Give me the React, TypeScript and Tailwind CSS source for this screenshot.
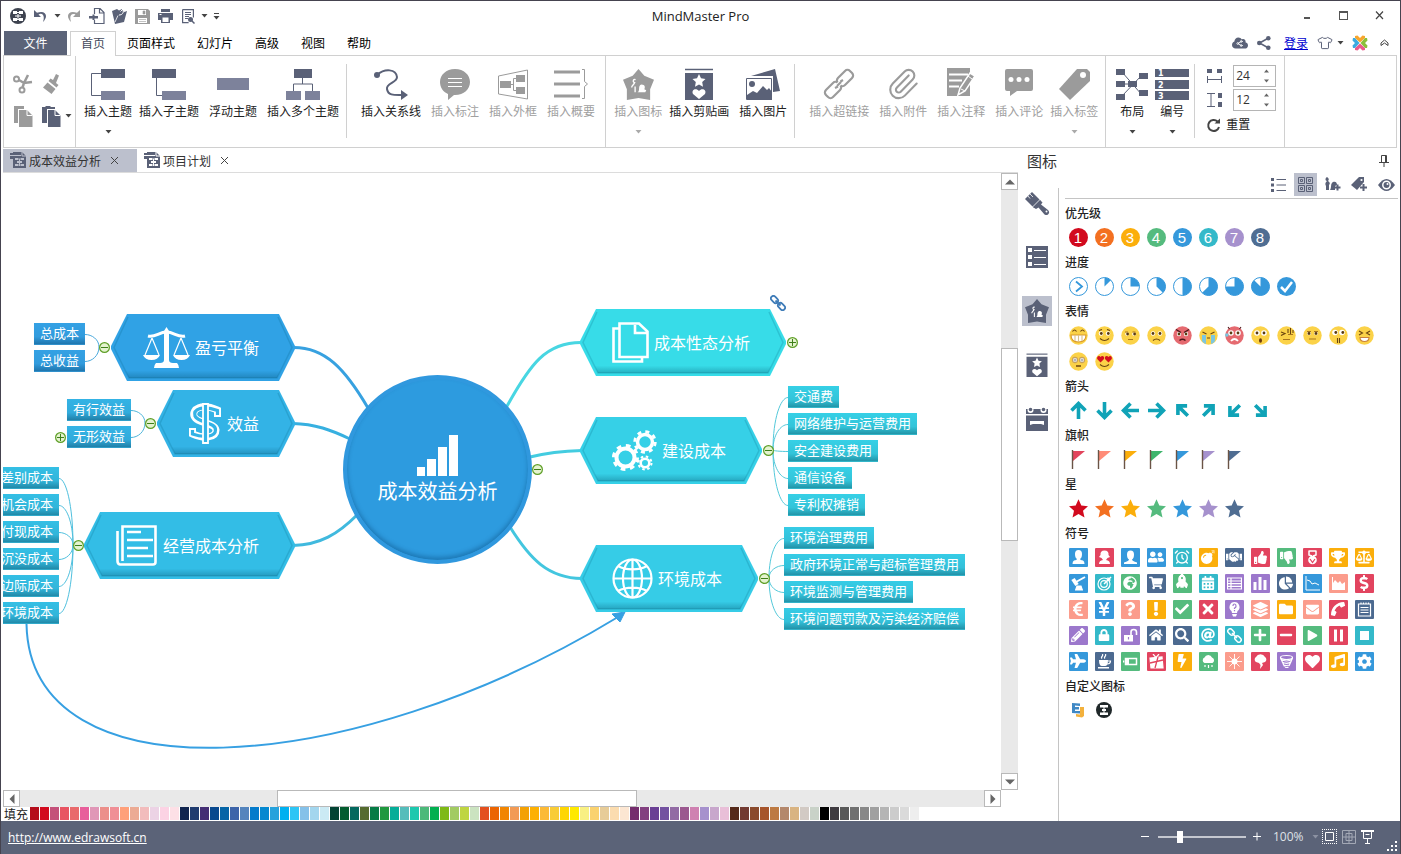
import React from 'react';
import {
  FaUserFriends, FaBomb, FaHandshake, FaThumbsUp, FaThumbsDown, FaTrophy, FaBalanceScale,
  FaGlobeAfrica, FaShoppingCart, FaRocket, FaCalendarAlt, FaChartPie, FaDollarSign,
  FaEuroSign, FaYenSign, FaQuestion, FaExclamation, FaCheck, FaTimes, FaLayerGroup,
  FaFolder, FaEnvelope, FaPhoneAlt, FaPencilAlt, FaLock, FaHome, FaSearch, FaAt,
  FaPlus, FaMinus, FaPlay, FaPlane, FaBolt, FaHeart, FaMusic,
  FaCog, FaCloud, FaTshirt,
} from 'react-icons/fa';
import { AlarmClock, Share2, Paperclip } from 'lucide-react';

const DARK = '#5a6177';
const SOFT = '#7d829b';
const GRAY = '#9b9b9b';

/* ---------- Small helpers ---------- */

const Caret: React.FC<{ color?: string }> = ({ color = '#444' }) => (
  <svg width="7" height="4" viewBox="0 0 7 4"><path d="M.5 0h6L3.5 3.5z" fill={color} /></svg>
);

const IconButton: React.FC<{ label: string; className?: string; children: React.ReactNode }> = ({ label, className = 'w-[23px] h-6', children }) => (
  <button type="button" aria-label={label} className={`flex items-center justify-center shrink-0 ${className}`}>{children}</button>
);

const MapGlyph: React.FC<{ active?: boolean }> = ({ active }) => {
  const back = active ? '#bcc0cd' : '#fff';
  return (
    <svg width="17" height="17" viewBox="0 0 17 17">
      <path d="M3 0h9l4 4v12H3V7H0V1h3z" fill={DARK} />
      <path d="M0 3.500h11M12 0v4h4" stroke={back} fill="none" />
      <path d="M5 6h3v2H5zM11 6h3v2h-3zM5 12h3v2H5zM11 12h3v2h-3zM7 9h5v2H7z" fill={back} />
      <path d="M9.500 7v7M8 7h3M8 13h3" stroke={back} fill="none" />
    </svg>
  );
};

const LogoGlyph: React.FC = () => (
  <svg width="16" height="16" viewBox="0 0 16 16">
    <circle cx="8" cy="8" r="8" fill="#3e4350" />
    <path d="M3 3h4v3H3zM9 3h4v3H9zM3 10h4v3H3zM9 10h4v3H9z" fill="#fff" />
    <path d="M5 8h6M8 6v5M7 4.500h2M7 11.500h2" stroke="#fff" />
  </svg>
);

/* ---------- Title bar ---------- */

const TitleBar: React.FC = () => (
  <header className="grid grid-cols-[1fr_auto_1fr] items-center h-[30px] shrink-0">
    <div className="flex items-center pl-[5px]">
      <IconButton label="MindMaster"><LogoGlyph /></IconButton>
      <IconButton label="撤销">
        <svg width="15" height="14" viewBox="0 0 15 14"><path d="M1 1v7h7L5.500 5.500c3-2 7 0 4.500 7.500C16 7 12.500.5 4 3.800z" fill={DARK} /></svg>
      </IconButton>
      <IconButton label="撤销列表" className="w-2.5 h-6"><Caret /></IconButton>
      <IconButton label="重做">
        <svg width="15" height="14" viewBox="0 0 15 14"><path d="M14 1v7H7l2.500-2.500C5.500 4 3 6.500 5 13-1 7 2.500.5 11 3.800z" fill={GRAY} /></svg>
      </IconButton>
      <IconButton label="新建">
        <svg width="16" height="16" viewBox="0 0 16 16">
          <path d="M5.500 6V.5h5.500l4 4v11H5.500V12M10.500.5V5H15" fill="none" stroke={DARK} strokeWidth="1.200" />
          <path d="M0 8h3.500V6.500h2V8H9v2.500H5.500V12h-2v-1.500H0z" fill={DARK} />
        </svg>
      </IconButton>
      <IconButton label="打开">
        <svg width="17" height="16" viewBox="0 0 17 16">
          <path d="M1 3l5-2 2 1.500L11 1l2 3 3-1-3 11-9 2z" fill={DARK} />
          <path d="M8 7c3 0 5-2 4-5M9.500 3.500L12 1l3 2" stroke="#fff" strokeWidth="1" fill="none" />
          <path d="M4 14l3-6.500" stroke="#fff" strokeWidth=".8" fill="none" />
        </svg>
      </IconButton>
      <IconButton label="保存">
        <svg width="15" height="15" viewBox="0 0 15 15">
          <path d="M0 0h13l2 2v13H0z" fill={GRAY} />
          <path d="M3 1h8v5H3zM3 9h9v5H3z" fill="#fff" />
          <path d="M8 2h2v3H8z M4 10.500h7M4 12.500h7" fill={GRAY} stroke={GRAY} strokeWidth=".6" />
        </svg>
      </IconButton>
      <IconButton label="打印">
        <svg width="15" height="14" viewBox="0 0 15 14">
          <path d="M3 0h9v4h3v7h-3v3H3v-3H0V4h3z" fill={DARK} />
          <path d="M3 3.500h9M1.500 5.500h2" stroke="#fff" /><path d="M4.500 8.500h6V13h-6z" fill="#fff" />
        </svg>
      </IconButton>
      <IconButton label="预览">
        <svg width="13" height="15" viewBox="0 0 13 15">
          <path d="M.6.6h10.800v8M.600.600v13h6" fill="none" stroke={DARK} strokeWidth="1.200" />
          <path d="M3 3.500h6M3 5.500h6M3 7.500h4M3 9.500h3" stroke={DARK} />
          <circle cx="8.500" cy="10.500" r="2.500" fill={DARK} /><path d="M10 12l2.500 2.500" stroke={DARK} strokeWidth="1.500" />
        </svg>
      </IconButton>
      <IconButton label="预览列表" className="w-2 h-6"><Caret /></IconButton>
      <IconButton label="自定义工具栏" className="w-4 h-6">
        <svg width="7" height="7" viewBox="0 0 7 7"><path d="M1 .5h5" stroke="#444" /><path d="M.5 3h6l-3 3.500z" fill="#444" /></svg>
      </IconButton>
    </div>
    <h1 className="pt-0.5 text-[13px] text-[#222]">MindMaster Pro</h1>
    <div className="flex items-center justify-end pr-[3px]">
      <IconButton label="最小化" className="w-9 h-6"><span className="w-1.5 h-0.5 mt-1 bg-[#555]" /></IconButton>
      <IconButton label="最大化" className="w-9 h-6"><span className="size-[9px] mb-0.5 border border-t-2 border-[#555]" /></IconButton>
      <IconButton label="关闭" className="w-9 h-6">
        <svg width="9" height="9" viewBox="0 0 9 9" className="mb-0.5"><path d="M1 .5l7 7.500M8 .5L1 8" stroke="#444" strokeWidth="1.200" /></svg>
      </IconButton>
    </div>
  </header>
);

/* ---------- Menu tabs ---------- */

const menuTabs = ['页面样式', '幻灯片', '高级', '视图', '帮助'];

const MenuBar: React.FC = () => (
  <nav className="flex items-start justify-between h-6 shrink-0 pl-[3px] pr-1 text-xs text-black">
    <div className="flex h-full">
      <button type="button" className="w-[63px] mr-[3px] pt-0.5 bg-[#5b6378] text-white">文件</button>
      <button type="button" className="relative h-[25px] px-2.5 bg-white border border-b-0 border-[#d0d0d0] text-[#444a5c]">首页</button>
      {menuTabs.map((tab) => <button type="button" key={tab} className="px-[11px] pt-0.5">{tab}</button>)}
    </div>
    <div className="flex items-center h-full">
      <IconButton label="云" className="w-6 h-6">
        <span className="relative flex items-center justify-center">
          <FaCloud size={16} color={DARK} />
          <Share2 size={7} color="#fff" strokeWidth={3} className="absolute top-[5px]" />
        </span>
      </IconButton>
      <IconButton label="分享" className="w-6 h-6">
        <svg width="14" height="14" viewBox="0 0 14 14"><path d="M11.500 2L2.500 7l9 5" fill="none" stroke={DARK} strokeWidth="1.500" /><circle cx="11.300" cy="2.300" r="2.300" fill={DARK} /><circle cx="2.300" cy="7" r="2.300" fill={DARK} /><circle cx="11.300" cy="11.700" r="2.300" fill={DARK} /></svg>
      </IconButton>
      <a href="#login" className="px-2 pt-0.5 text-[#0000d0] underline">登录</a>
      <IconButton label="主题" className="w-[18px] h-6">
        <FaTshirt size={14} color="#fff" stroke={DARK} strokeWidth={45} className="overflow-visible" />
      </IconButton>
      <IconButton label="主题列表" className="w-[13px] h-6"><Caret /></IconButton>
      <IconButton label="产品" className="w-[25px] h-6">
        <svg width="16" height="16" viewBox="0 0 16 16">
          <path d="M3 1l2.500-.5L8 3l2.500-2.500L13 1v2L8 7.500 3 3z" fill="#f7a62d" />
          <path d="M15 3l.5 2.500L13 8l2.500 2.500L15 13h-2L8.500 8 13 3z" fill="#8bbf3c" />
          <path d="M3 15l2.500.5L8 13l2.500 2.500L13 15v-2L8 8.500 3 13z" fill="#ea5a8c" />
          <path d="M1 3L.5 5.500 3 8 .5 10.500 1 13h2l4.500-5L3 3z" fill="#3cabe0" />
        </svg>
      </IconButton>
      <IconButton label="收起功能区" className="w-6 h-6">
        <svg width="9" height="8" viewBox="0 0 9 8"><path d="M1 4l3.500-3L8 4v2.500L4.500 4 1 6.500z" fill="none" stroke="#444" /></svg>
      </IconButton>
    </div>
  </nav>
);

/* ---------- Ribbon ---------- */

interface Tool {
  label: string;
  icon: React.ReactNode;
  disabled?: boolean;
  menu?: boolean;
}

const insertTopics: Tool[] = [
  { label: '插入主题', menu: true, icon: (
    <svg width="36" height="32"><path d="M11 5.500H1.500v22H11" fill="none" stroke={DARK} /><path d="M11 1h24v9H11z" fill={DARK} /><path d="M11 23h24v9H11z" fill={SOFT} /></svg>) },
  { label: '插入子主题', icon: (
    <svg width="36" height="32"><path d="M5.500 10v17.500H11" fill="none" stroke={DARK} /><path d="M1 1h24v9H1z" fill={DARK} /><path d="M11 23h24v9H11z" fill={SOFT} /></svg>) },
  { label: '浮动主题', icon: <svg width="32" height="32"><path d="M0 10h32v12H0z" fill={SOFT} /></svg> },
  { label: '插入多个主题', icon: (
    <svg width="36" height="32"><path d="M17.500 10v6M8.500 23v-7h19v7" fill="none" stroke={DARK} /><path d="M9 1h18v9H9z" fill={DARK} /><path d="M1 23h15v9H1zM20 23h15v9H20z" fill={SOFT} /></svg>) },
];

const insertLinks: Tool[] = [
  { label: '插入关系线', icon: (
    <svg width="36" height="32"><circle cx="4" cy="7" r="3" fill={DARK} /><path d="M4 7C12 0 23 1 24 9c0 6-11 6-10 12 1 7 8 6 16 6" fill="none" stroke={DARK} strokeWidth="2" /><path d="M28 22l7 5-7 5z" fill={DARK} /></svg>) },
  { label: '插入标注', disabled: true, icon: (
    <svg width="32" height="32"><path d="M16 1c9 0 15 6 15 13S25 27 16 27h-1l-6 5v-6C4 24 1 19 1 14 1 7 7 1 16 1z" fill={GRAY} /><path d="M9 10.500h14M9 14.500h14M9 18.500h14" stroke="#fff" /></svg>) },
  { label: '插入外框', disabled: true, icon: (
    <svg width="32" height="32"><path d="M1.500 8L30.500 2v29L1.500 26z" fill="none" stroke={GRAY} /><path d="M3 13h11v7H3zM19 7h9v7h-9zM19 19h9v7h-9z" fill={GRAY} /><path d="M14 16.500h2.500M19 10.500h-2.500v12H19" fill="none" stroke={GRAY} /></svg>) },
  { label: '插入概要', disabled: true, icon: (
    <svg width="36" height="32"><path d="M1 4h26M1 16h26M1 28h26" stroke={GRAY} strokeWidth="3" /><path d="M29 1.500h2.500v12l3 2.500-3 2.500v12H29" fill="none" stroke={GRAY} /></svg>) },
];

const Pentagon: React.FC<{ size: number; color: string }> = ({ size, color }) => (
  <svg width={size} height={size} viewBox="0 0 32 32">
    <path d="M16 0l6 7 10 4-4 10v11l-12-2-12 2V21L0 11l10-4z" fill={color} />
    <path d="M13 11c-3-1-3 3-1 3-1 3-3 3-3 5M12.500 18v6" fill="none" stroke="#fff" strokeWidth="1.400" />
    <path d="M15 24c3-1 0-7 4-8 4 0 4 3 3 5l2 1-1 2h-8z" fill="#fff" />
  </svg>
);

const ClipArt: React.FC<{ size: number }> = ({ size }) => (
  <svg width={size} height={size} viewBox="0 0 30 32">
    <path d="M1 1.500h28" stroke={DARK} strokeWidth="1.500" /><path d="M1 5h28v27H1z" fill={DARK} />
    <path d="M15 6l2 4.300 4.500.6-3.300 3.200.8 4.600-4-2.200-4 2.200.8-4.600-3.300-3.200 4.500-.6zM15 31l-6-5c-2-4 3-6.500 6-3 3-3.500 8-1 6 3z" fill="#fff" />
  </svg>
);

const insertMedia: Tool[] = [
  { label: '插入图标', disabled: true, menu: true, icon: <Pentagon size={31} color={GRAY} /> },
  { label: '插入剪贴画', icon: <ClipArt size={32} /> },
  { label: '插入图片', icon: (
    <svg width="36" height="32"><path d="M6 8L30 1l5 22-7 1V8z" fill={DARK} /><path d="M1.500 10.500h25v21h-25z" fill="#fff" stroke={DARK} /><circle cx="7" cy="16" r="3" fill={DARK} /><path d="M2 27l6-4 4 2 6-7 4 4 2-2 3 4v8H2z" fill={DARK} /></svg>) },
];

const insertNotes: Tool[] = [
  { label: '插入超链接', disabled: true, icon: (
    <svg width="32" height="32" fill="none" stroke={GRAY} strokeWidth="2.200">
      <rect x="-8.500" y="-5" width="17" height="10" rx="3.500" transform="translate(22 10) rotate(-45)" />
      <rect x="-8.500" y="-5" width="17" height="10" rx="3.500" transform="translate(10 22) rotate(-45)" />
      <path d="M13.500 18.500l5-5" stroke="#fff" strokeWidth="4" /><path d="M12 20l3-1.500M20 12l-2.500 1.500M14 18l4-4" />
    </svg>) },
  { label: '插入附件', disabled: true, icon: <Paperclip size={34} color={GRAY} strokeWidth={1.5} className="-my-px" /> },
  { label: '插入注释', disabled: true, icon: (
    <svg width="32" height="32"><path d="M2 0h23v28H2z" fill={GRAY} /><path d="M4 6.500h19M4 12.500h13M4 18.500h10" stroke="#fff" strokeWidth="2" /><path d="M13 27l2-7L25 5l5 3-10 15z" fill={GRAY} stroke="#fff" strokeWidth="1.500" /><path d="M16 21l4 2M23 8l4 3" stroke="#fff" /></svg>) },
  { label: '插入评论', disabled: true, icon: (
    <svg width="32" height="32"><path d="M4 1h24q2 0 2 2v18q0 2-2 2H14l-7 5v-5H4q-2 0-2-2V3q0-2 2-2z" fill={GRAY} /><circle cx="8" cy="11.500" r="2.500" fill="#fff" /><circle cx="16" cy="11.500" r="2.500" fill="#fff" /><circle cx="24" cy="11.500" r="2.500" fill="#fff" /></svg>) },
  { label: '插入标签', disabled: true, menu: true, icon: (
    <svg width="32" height="32"><path d="M19 1h10l3 3v9L12 32 1 21z" fill={GRAY} /><circle cx="25" cy="7" r="3" fill="#fff" /></svg>) },
];

const ToolButton: React.FC<Tool> = ({ label, icon, disabled, menu }) => (
  <button type="button" disabled={disabled} className={`flex flex-col items-center h-full pt-3 shrink-0 ${menu ? 'px-0.5' : 'px-[5px]'} ${disabled ? 'text-[#a0a0a0]' : 'text-[#222]'}`}>
    <span className="flex items-center h-8">{icon}</span>
    <span className="h-[30px] leading-6 whitespace-nowrap">{label}</span>
    {menu && <Caret color={disabled ? '#aaa' : '#444'} />}
  </button>
);

const Separator: React.FC = () => <span className="w-px h-[74px] mt-2 mx-0.5 bg-[#d0d0d0] shrink-0" />;

const Spinner: React.FC<{ id: string; label: string; value: string; icon: React.ReactNode }> = ({ id, label, value, icon }) => (
  <label htmlFor={id} className="flex items-center gap-2.5">
    {icon}
    <span className="flex items-center w-[43px] h-[22px] pl-0.5 pr-1.5 border border-[#b5b5b5]">
      <input id={id} aria-label={label} defaultValue={value} className="w-7 min-w-0 text-[#333] outline-none" />
      <svg width="5" height="14" viewBox="0 0 5 14" className="shrink-0"><path d="M0 3.500L2.500.5 5 3.500zM0 10.500h5L2.500 13.500z" fill="#666" /></svg>
    </span>
  </label>
);

const Ribbon: React.FC = () => (
  <div className="flex h-[93px] shrink-0 ml-0.5 mr-[3px] mb-px border border-[#d0d0d0] text-xs">
    <div className="grid grid-cols-2 content-start gap-x-1 gap-y-2 w-[72px] pt-4 pl-[7px] pr-3 border-r border-[#d0d0d0] shrink-0">
      <IconButton label="剪切" className="h-6">
        <svg width="20" height="20" viewBox="0 0 20 20" fill="none" stroke={GRAY} strokeWidth="2">
          <circle cx="3.500" cy="5" r="2.500" /><circle cx="9" cy="16" r="2.500" /><path d="M6 6l5 3 8-1M9.500 13.500L11 9l4-8" strokeWidth="2.500" />
        </svg>
      </IconButton>
      <IconButton label="格式刷" className="h-6">
        <svg width="17" height="20" viewBox="0 0 17 20"><path d="M13 0l3 1.500L13 9l2.500 2-2 2.500-8-6.500 2-2.500L10 6zM4.500 8.500l8 6.500-4 5L0 13.500z" fill={GRAY} /></svg>
      </IconButton>
      <IconButton label="复制" className="h-6">
        <svg width="19" height="21" viewBox="0 0 19 21"><path d="M0 0h10v3H4v14H0z" fill={GRAY} /><path d="M5 4h8l5.500 5.500V21H5z" fill={GRAY} /><path d="M13 4v5.500h5.500" fill="none" stroke="#fff" /></svg>
      </IconButton>
      <IconButton label="粘贴" className="h-6 gap-1">
        <svg width="19" height="21" viewBox="0 0 19 21" className="shrink-0"><path d="M0 1h3l1-1h4l1 1h4v2H5v14H0z" fill={DARK} /><path d="M6 4h7l5.500 5.500V21H6z" fill={DARK} /><path d="M13 4v5.500h5.500" fill="none" stroke="#fff" /></svg>
        <span className="-mr-3"><Caret /></span>
      </IconButton>
    </div>
    <div className="flex pl-1.5 pr-[5px] border-r border-[#d0d0d0]">
      {insertTopics.map((t) => <ToolButton key={t.label} {...t} />)}
      <Separator />
      <div className="flex pl-[7px]">{insertLinks.map((t) => <ToolButton key={t.label} {...t} />)}</div>
    </div>
    <div className="flex pl-1.5 pr-[5px] border-r border-[#d0d0d0]">
      {insertMedia.map((t) => <ToolButton key={t.label} {...t} />)}
      <Separator />
      <div className="flex pl-[7px]">{insertNotes.map((t) => <ToolButton key={t.label} {...t} />)}</div>
    </div>
    <div className="flex pl-1.5 pr-2 border-r border-[#d0d0d0]">
      <ToolButton label="布局" menu icon={(
        <svg width="36" height="32">
          <path d="M8 4l20 23M28 7L8 28M8 16h12" stroke={DARK} fill="none" />
          <path d="M2 1h9v6H2zM2 13h9v6H2zM2 26h9v6H2zM14 13h9v6h-9zM25 5h9v6h-9zM25 22h9v6h-9z" fill={DARK} />
        </svg>)} />
      <ToolButton label="编号" menu icon={(
        <svg width="36" height="32">
          <path d="M1 1h34v8H1zM1 12h34v9H1zM1 23h34v9H1z" fill={DARK} />
          <g fill="#fff" fontSize="8" fontFamily="DejaVu Sans" fontWeight="bold"><text x="4" y="8">1</text><text x="4" y="19.500">2</text><text x="4" y="30.500">3</text></g>
        </svg>)} />
      <Separator />
      <div className="flex flex-col gap-0.5 pt-[9px] pl-[9px]">
        <Spinner id="hgap" label="水平间距" value="24" icon={<svg width="17" height="16"><path d="M1 1h5v4H1zM11 1h5v4h-5z" fill={DARK} /><path d="M1.500 8v7M15.500 8v7M1 11.500h15" stroke={DARK} /></svg>} />
        <Spinner id="vgap" label="垂直间距" value="12" icon={<svg width="17" height="16"><path d="M12 1h4v5h-4zM12 10h4v5h-4z" fill={DARK} /><path d="M1 1.500h8M1 14.500h8M5 1v14" stroke={DARK} /></svg>} />
        <button type="button" className="flex items-center gap-[5px] h-6 text-[#222]">
          <svg width="15" height="15" viewBox="0 0 15 15"><path d="M11.500 3.500A5.500 5.500 0 1 0 13 9" fill="none" stroke="#444" strokeWidth="2" /><path d="M8.500 5.500H14V.5z" fill="#444" /></svg>
          重置
        </button>
      </div>
    </div>
  </div>
);

/* ---------- Mind map ---------- */

interface TopicData {
  title: string;
  x: number;
  y: number;
  width: number;
  color: string;
  icon: React.ReactNode;
}

const topics: TopicData[] = [
  { title: '盈亏平衡', x: 108, y: 141, width: 184, color: '#30a2e5', icon: (
    <svg width="47" height="41" viewBox="0 0 47 41" fill="#fff">
      <path d="M21 4l2.500-4L26 4v29q0 3 4 3h4q2 2 2 5H11q0-3 2-5h4q4 0 4-3z" />
      <path d="M5 9C12 11 16 5 23.500 5S35 11 42 9" fill="none" stroke="#fff" strokeWidth="3" />
      <path d="M9 11L2 28M9 11l7 17M38 11l-7 17M38 11l7 17" stroke="#fff" strokeWidth="1.200" />
      <path d="M0 28h17q-2 5-8.500 5T0 28zM30 28h17q-2 5-8.500 5T30 28z" />
    </svg>) },
  { title: '效益', x: 154, y: 217, width: 138, color: '#33b3e6', icon: (
    <svg width="33" height="41" viewBox="0 0 33 41" fill="none">
      <path d="M28.500 14V7C12 0 3 6 5 13c3 8 21 6 22 14 0 8-12 9-23.500 4v-6" stroke="#fff" strokeWidth="7" />
      <path d="M28.500 12V7.500C14 2 4 6 6 13c3 7 21 6 20.500 14 0 7-12 8-23 4v-4" stroke="#33b3e6" strokeWidth="3.200" />
      <path d="M14 1h5v39h-5z" stroke="#fff" strokeWidth="1.800" fill="#33b3e6" />
    </svg>) },
  { title: '经营成本分析', x: 81, y: 339, width: 211, color: '#33bde6', icon: (
    <svg width="42" height="41" viewBox="0 0 42 41" fill="none" stroke="#fff" strokeWidth="2.600">
      <path d="M6.500 36V1.500h33V37q0 2.500-2.500 2.500H4Q1.500 39 1.500 36V6" />
      <path d="M11 7h14M11 15h26M11 23h21M11 31h26" strokeWidth="2.500" />
    </svg>) },
  { title: '成本性态分析', x: 577, y: 136, width: 206, color: '#37dce8', icon: (
    <svg width="37" height="41" viewBox="0 0 37 41" fill="none" stroke="#fff" strokeWidth="2.600">
      <path d="M7.500 1.500H27l8.500 8V35h-28zM23 3v8h12M7 6.500H1.500v33H30V36" />
    </svg>) },
  { title: '建设成本', x: 577, y: 244, width: 182, color: '#36d0e7', icon: (
    <svg width="45" height="41" viewBox="0 0 45 41" fill="none" stroke="#fff">
      <circle cx="13.500" cy="27.500" r="9" strokeWidth="4" /><circle cx="13.500" cy="27.500" r="12" strokeWidth="3" strokeDasharray="4.700 4.725" />
      <circle cx="33" cy="12" r="7.500" strokeWidth="3.500" /><circle cx="33" cy="12" r="10.300" strokeWidth="2.800" strokeDasharray="4 4.090" />
      <circle cx="33" cy="33" r="4.300" strokeWidth="2.600" /><circle cx="33" cy="33" r="6.500" strokeWidth="2" strokeDasharray="2.500 2.605" />
    </svg>) },
  { title: '环境成本', x: 577, y: 372, width: 178, color: '#36cce7', icon: (
    <svg width="41" height="41" viewBox="0 0 41 41" fill="none" stroke="#fff" strokeWidth="2.200">
      <circle cx="20.500" cy="20.500" r="19" /><ellipse cx="20.500" cy="20.500" rx="9.500" ry="19" />
      <path d="M20.500 1v39M1 20.500h39M6 8c8 4.500 21 4.500 29 0M6 33c8-4.500 21-4.500 29 0" />
    </svg>) },
];

const Topic: React.FC<TopicData> = ({ title, x, y, width: w, color, icon }) => (
  <div className="absolute flex items-center gap-[5px] h-[67px] pl-8 text-base text-white whitespace-nowrap" style={{ left: x, top: y, width: w }}>
    <svg width={w} height="67" className="absolute inset-0">
      <defs>
        <linearGradient id={`shade-${x}-${y}`} x1="0" y1="0" x2="0" y2="1">
          <stop offset=".88" stopColor="#004a66" stopOpacity="0" /><stop offset="1" stopColor="#004a66" stopOpacity=".3" />
        </linearGradient>
      </defs>
      <path d={`M0 32L16 0H${w - 16}L${w} 32v3L${w - 16} 67H16L0 35z`} fill={color} />
      <path d={`M3.500 33.500L18 2H${w - 18}L${w - 3.500} 33.500L${w - 18} 64H18z`} fill={`url(#shade-${x}-${y})`} />
      <path d={`M17 3L3 33.500L18 64H${w - 18}L${w - 3} 33.500L${w - 17} 3`} fill="none" stroke="#00607f" strokeOpacity=".2" strokeWidth="1.500" />
    </svg>
    <span className="relative">{icon}</span>
    <span className="relative">{title}</span>
  </div>
);

interface Branch {
  side: 'left' | 'right';
  edge: number;
  top: number;
  joint: [number, number];
  line: string;
  tone: string;
  items: string[];
}

const branches: Branch[] = [
  { side: 'left', edge: 82, top: 150, joint: [96, 174], line: '#4aa9dc', tone: 'from-[#34a1e4] via-[#319bdd] to-[#1f76ae] border-[#3190cb]', items: ['总成本', '总收益'] },
  { side: 'left', edge: 128, top: 226, joint: [142, 250], line: '#4cb5da', tone: 'from-[#34b3e5] via-[#31abdc] to-[#2180a8] border-[#319fc9]', items: ['有行效益', '无形效益'] },
  { side: 'left', edge: 56, top: 294, joint: [70, 372], line: '#4fc0de', tone: 'from-[#34bfe5] via-[#31b5da] to-[#2189a8] border-[#31a9c9]', items: ['差别成本', '机会成本', '付现成本', '沉没成本', '边际成本', '环境成本'] },
  { side: 'right', edge: 785, top: 213, joint: [770, 277], line: '#54c9da', tone: 'from-[#36d0e6] via-[#33c4d9] to-[#2295a8] border-[#33b6c9]', items: ['交通费', '网络维护与运营费用', '安全建设费用', '通信设备', '专利权摊销'] },
  { side: 'right', edge: 781, top: 354, joint: [766, 405], line: '#54c9da', tone: 'from-[#36cce6] via-[#33c0d9] to-[#2292a8] border-[#33b2c9]', items: ['环境治理费用', '政府环境正常与超标管理费用', '环境监测与管理费用', '环境问题罚款及污染经济赔偿'] },
];

const toggles: { x: number; y: number; open: boolean }[] = [
  { x: 101, y: 174, open: true }, { x: 147, y: 250, open: true }, { x: 57, y: 264, open: false },
  { x: 75, y: 372, open: true }, { x: 534, y: 296, open: true }, { x: 789, y: 169, open: false },
  { x: 765, y: 277, open: true }, { x: 761, y: 405, open: true },
];

const branchPath = (b: Branch, i: number) => {
  const [jx, jy] = b.joint;
  const ty = b.top + 11.5 + i * 27;
  return `M${jx} ${jy}C${jx} ${jy + (ty - jy) * 0.6} ${(jx + b.edge) / 2} ${ty} ${b.edge} ${ty}`;
};

const MindMap: React.FC = () => (
  <main className="relative flex-1 min-w-0 overflow-hidden bg-white">
    <svg className="absolute inset-0 size-full" fill="none">
      <g strokeWidth="3">
        <path d="M290 174.500C322 174 342 196 365 235" stroke="#37a1e0" />
        <path d="M290 250.500C312 251 328 257 347 266" stroke="#37b0e0" />
        <path d="M290 372.500C317 372 335 361 354 342" stroke="#40b9de" />
        <path d="M503 235C527 191 543 169 579 169.500" stroke="#48d6e2" />
        <path d="M527 284C547 279 562 278 579 277.500" stroke="#43cce0" />
        <path d="M507 354C527 386 545 405 579 405.500" stroke="#43c6df" />
      </g>
      <path d="M23.500 451C27 627 347 607 615 444" stroke="#37a0e2" strokeWidth="2" />
      <path d="M622 439l-13 2 8 8z" fill="#37a0e2" stroke="#37a0e2" />
      {branches.map((b) => b.items.map((item, i) => <path key={item} d={branchPath(b, i)} stroke={b.line} />))}
    </svg>

    {/* Central topic */}
    <div className="absolute left-[340px] top-[202px] size-[189px] rounded-full bg-[#2d9bdf] border-4 border-[#3098de] shadow-[inset_0_-3px_4px_rgba(0,60,110,0.35)] flex flex-col items-center justify-end pb-[52px] text-white">
      <svg width="42" height="41" viewBox="0 0 42 41" fill="#fff"><path d="M0 32h8v9H0zM10 24h9v17h-9zM21 12h9v29h-9zM32 0h9v41h-9z" /></svg>
      <span className="text-xl leading-8 whitespace-nowrap">成本效益分析</span>
    </div>

    {topics.map((t) => <Topic key={t.title} {...t} />)}

    {branches.map((b) => (
      <ul
        key={b.items[0]}
        className={`absolute flex flex-col gap-[5px] text-[13px] text-white whitespace-nowrap ${b.side === 'left' ? 'items-end -translate-x-full' : 'items-start'}`}
        style={{ left: b.edge, top: b.top }}
      >
        {b.items.map((item) => (
          <li key={item} className={`h-[22px] px-1.5 leading-5 bg-linear-to-b via-65% border-b ${b.tone}`}>{item}</li>
        ))}
      </ul>
    ))}

    {toggles.map((t) => (
      <button type="button" key={`${t.x}-${t.y}`} aria-label={t.open ? '折叠' : '展开'} className="absolute size-[11px]" style={{ left: t.x - 5, top: t.y - 5 }}>
        <svg width="11" height="11" viewBox="0 0 11 11">
          <circle cx="5.500" cy="5.500" r="4.900" fill="#e4f3cf" stroke="#5f9f28" strokeWidth="1.200" />
          <path d={t.open ? 'M2 5.500h7' : 'M2 5.500h7M5.500 2v7'} stroke="#3f7f1a" />
        </svg>
      </button>
    ))}

    <a href="#link" aria-label="超链接" className="absolute left-[767px] top-[122px]">
      <svg width="16" height="16" viewBox="0 0 16 16" fill="none" stroke="#3f7cb8" strokeWidth="1.800">
        <rect x="-4" y="-2.500" width="8" height="5" rx="2.500" transform="translate(4.500 4.500) rotate(45)" />
        <rect x="-4" y="-2.500" width="8" height="5" rx="2.500" transform="translate(11.500 11.500) rotate(45)" />
        <path d="M5.500 5.500l5 5" />
      </svg>
    </a>
  </main>
);

/* ---------- Workspace: document tabs, scroll bars, palette ---------- */

const ScrollArrow: React.FC<{ label: string; d: string }> = ({ label, d }) => (
  <button type="button" aria-label={label} className="flex items-center justify-center size-[17px] shrink-0 bg-white border border-[#b9b9b9]">
    <svg width="10" height="10" viewBox="0 0 10 10"><path d={d} fill="#666" /></svg>
  </button>
);

const palette = [
  '#b50d1b', '#d20a1e', '#c4517a', '#e85462', '#e96a6c', '#e85f9b', '#e097b7', '#ec8f8a', '#f08f96', '#ffa07a', '#ecab94', '#f2bcbc', '#ecd3e5', '#fcd3e4', '#fde0e6',
  '#10244e', '#1f3b6f', '#442e74', '#08488e', '#0564a6', '#3d64a9', '#5484bd', '#047bcb', '#0588d0', '#26a2dc', '#00b0f0', '#2dc5f5', '#85c1e9', '#a3d6ee', '#cbeaf4',
  '#034334', '#035c2f', '#04685e', '#556b2f', '#057b45', '#20983f', '#05ad98', '#54bdbb', '#1ec8ae', '#4cb97a', '#02af50', '#7eb916', '#a2cb62', '#bfd541', '#cbe3c0',
  '#e3501f', '#eb6402', '#f18501', '#f29a54', '#f3a104', '#fdb002', '#fcba36', '#f9cc35', '#fed602', '#ffe900', '#f9f083', '#fad26f', '#e7cc98', '#fbdcaf', '#fce6d2',
  '#752d6d', '#834080', '#6a3f94', '#7351a0', '#926ba4', '#9b588f', '#cf81b1', '#a691cd', '#c8a7cc', '#e9bfd8',
  '#55291a', '#723a31', '#8a4a2c', '#a6542b', '#bd7a42', '#b4886c', '#d9b482', '#d2cac4', '#c9d2c8',
  '#000000', '#3f3b40', '#595959', '#707070', '#888888', '#a0a0a0', '#b5b5b5', '#cccccc', '#dadada', '#eeeeee',
];

const DocTab: React.FC<{ name: string; active?: boolean }> = ({ name, active }) => (
  <div className={`flex items-center h-[23px] pl-[7px] ${active ? 'w-[134px] bg-[#bcc0cd]' : ''}`}>
    <MapGlyph active={active} />
    <button type="button" className="pt-0.5 pl-0.5 pr-[7px] text-[#333]">{name}</button>
    <IconButton label="关闭" className="w-3 h-5">
      <svg width="9" height="9" viewBox="0 0 9 9"><path d="M1 1l7 7M8 1L1 8" stroke="#444" /></svg>
    </IconButton>
  </div>
);

const Workspace: React.FC = () => (
  <div className="flex flex-col flex-1 min-w-0 pl-0.5 text-xs">
    <div className="flex shrink-0 border-b border-[#dcdcdc]">
      <DocTab name="成本效益分析" active />
      <DocTab name="项目计划" />
    </div>
    <div className="flex flex-1 min-h-0">
      <MindMap />
      <div className="flex flex-col w-[17px] bg-[#e9e9e9]">
        <ScrollArrow label="上" d="M0 7.500h10L5 2.500z" />
        <span className="flex-[159]" />
        <span className="flex-[191] bg-white border border-[#b9b9b9]" />
        <span className="flex-[233]" />
        <ScrollArrow label="下" d="M0 2.500h10L5 7.500z" />
      </div>
    </div>
    <div className="flex h-[17px] mr-[17px] shrink-0 bg-[#e9e9e9]">
      <ScrollArrow label="左" d="M7.500 0v10l-5-5z" />
      <span className="flex-[258]" />
      <span className="flex-[358] bg-white border border-[#b9b9b9]" />
      <span className="flex-[348]" />
      <ScrollArrow label="右" d="M2.500 0v10l5-5z" />
    </div>
    <div className="flex items-start h-3.5 shrink-0">
      <span className="w-[27px] pl-px shrink-0 leading-4 text-[#222]">填充</span>
      <div className="flex gap-px">
        {palette.map((c) => <button type="button" key={c} aria-label={c} className="w-[9px] h-[13px]" style={{ backgroundColor: c }} />)}
      </div>
    </div>
  </div>
);

/* ---------- Icon panel ---------- */

const Face: React.FC<{ red?: boolean; children: React.ReactNode }> = ({ red, children }) => (
  <svg width="19" height="19" viewBox="0 0 19 19" fill="none" stroke="#6b4510" strokeWidth="1.100">
    <circle cx="9.500" cy="9.500" r="9.200" fill={red ? '#e56a70' : '#fbd248'} stroke="none" />
    {children}
  </svg>
);

const Eyes: React.FC<{ y?: number; r?: number; dx?: number }> = ({ y = 7.5, r = 2.2, dx = 0 }) => (
  <g stroke="none">
    <circle cx="6" cy={y} r={r} fill="#fff" /><circle cx="13" cy={y} r={r} fill="#fff" />
    <circle cx={6 + dx} cy={y} r="1.400" fill="#5a3a10" /><circle cx={13 + dx} cy={y} r="1.400" fill="#5a3a10" />
  </g>
);

const faces = [
  <Face><path d="M3.500 5.500q2-3 4 0M11.500 5.500q2-3 4 0" /><path d="M2 9h15q0 7-7.500 7T2 9z" fill="#fff" stroke="#d99a2b" /><path d="M6 9v6M9.500 9v7M13 9v6" stroke="#d9c08b" /></Face>,
  <Face><Eyes dx={0.3} /><path d="M4 4.500l3-1M12 3.500l3 1M5 12.500q4.500 4 9 0" /></Face>,
  <Face><Eyes y={8} r={1.8} dx={0.6} /><path d="M7 13.500h5M4 6h3M11.500 6h3" stroke="#a8761f" /></Face>,
  <Face><Eyes /><path d="M6 14.500q3.500-3 7 0" /></Face>,
  <Face red><Eyes y={8} /><path d="M3 3.500l5 3M16 3.500l-5 3M6.500 14.500q3-2.500 6 0" stroke="#4a1518" strokeWidth="1.400" /></Face>,
  <Face><path d="M3 9h4v9q-2 0-4-3zM12 9h4v6q-2 3-4 3z" fill="#7cc6e0" stroke="none" /><path d="M3.500 6l4 2M15.500 6l-4 2M8 12h3" /></Face>,
  <Face red><Eyes y={7} r={2.8} /><path d="M3 1l1.500 2M16 1l-1.500 2" stroke="#4a1518" /><path d="M6 15q3.500-4 7 0" stroke="#fff" strokeWidth="1.800" /><circle cx="1.800" cy="9" r="1.800" fill="#7cc6e0" stroke="none" /></Face>,
  <Face><Eyes y={7} r={2.8} /><ellipse cx="9.500" cy="14.500" rx="1.500" ry="2.300" fill="#6b3a10" stroke="none" /></Face>,
  <Face><path d="M4 6l4 1.500-4 2M11 3v4M13.500 2v6M16 4v3" /><path d="M6 13.500h7M11 8.500h5" stroke="#a8761f" /></Face>,
  <Face><Eyes r={1.8} /><path d="M4 5.500h4M11 5.500h4M6 13h7" stroke="#a8761f" /></Face>,
  <Face><Eyes y={6.5} r={2.8} dx={0.8} /><path d="M8.500 12v5M10.500 12v5" /></Face>,
  <Face><path d="M4 5l3.500 2L4 9M15 5l-3.500 2L15 9" /><path d="M5 11.500h9q0 4-4.500 4T5 11.500z" fill="#fff" stroke="#c9823a" /></Face>,
  <Face><circle cx="6" cy="8" r="2.600" fill="#fff" stroke="#c9a25a" /><circle cx="13" cy="8" r="2.600" fill="#fff" stroke="#c9a25a" /><circle cx="6" cy="8" r="1" stroke="#aaa" /><circle cx="13" cy="8" r="1" stroke="#aaa" /><path d="M7 14h5" strokeWidth="1.500" /></Face>,
  <Face><path d="M5.500 10.500L2.200 7C1.500 4 4.500 3 5.500 5 7 3 9.800 4 9 7zM13.500 10.500L10 7c-.8-3 2-4 3.500-2 1.300-2 4-1 3.300 2z" fill="#d4101e" stroke="none" /><path d="M5 12.500q4.500 4 9 0" /></Face>,
];

const pieSlice = (part: number) => {
  const a = part * Math.PI * 2;
  return `M9.5 9.5V.5A9 9 0 ${part > 0.5 ? 1 : 0} 1 ${(9.5 + 9 * Math.sin(a)).toFixed(2)} ${(9.5 - 9 * Math.cos(a)).toFixed(2)}z`;
};

const Pie: React.FC<{ part: number }> = ({ part }) => (
  <svg width="19" height="19"><circle cx="9.500" cy="9.500" r="9" fill="#fff" stroke="#3598db" /><path d={pieSlice(part)} fill="#3598db" /></svg>
);

const progress = [
  <svg width="19" height="19"><circle cx="9.500" cy="9.500" r="9" fill="#fff" stroke="#3598db" /><path d="M7 4.500l6 5-6 5" fill="none" stroke="#3598db" strokeWidth="1.800" /></svg>,
  ...[1, 2, 3, 4, 5, 6, 7].map((n) => <Pie part={n / 8} />),
  <svg width="19" height="19"><circle cx="9.500" cy="9.500" r="9.500" fill="#3598db" /><path d="M4 10l4 4 7-9" fill="none" stroke="#fff" strokeWidth="2.500" /></svg>,
];

const priorityColors = ['bg-[#d20a1e]', 'bg-[#f37021]', 'bg-[#fbae0b]', 'bg-[#55bb7e]', 'bg-[#3598db]', 'bg-[#34b9c9]', 'bg-[#a691cd]', 'bg-[#4f6d92]'];
const priorities = priorityColors.map((c, i) => (
  <span className={`flex items-center justify-center size-[19px] rounded-full font-['Liberation_Sans'] text-[15px] leading-none text-white ${c}`}>{i + 1}</span>
));

const arrows = [0, 180, 270, 90, 315, 45, 225, 135].map((deg) => (
  <svg width="19" height="19"><path d={deg % 90 ? 'M9.5 17V4M3 9.5L9.5 3 16 9.5' : 'M9.5 18V3M2.5 9.5l7-7 7 7'} transform={`rotate(${deg} 9.5 9.5)`} fill="none" stroke="#10a3b7" strokeWidth="3.600" /></svg>
));

const flags = ['#e2445c', '#ff8c78', '#fbae0b', '#3fb56c', '#3598db', '#a691cd', '#4f6d92'].map((c) => (
  <svg width="19" height="19"><path d="M4 1h12L4 11z" fill={c} /><path d="M3.500 0v19" stroke="#6a5446" strokeWidth="1.400" /></svg>
));

const stars = ['#d20a1e', '#f37021', '#fbae0b', '#55bb7e', '#3598db', '#a691cd', '#4f6d92'].map((c) => (
  <svg width="19" height="19"><path d="M9.500.3l2.800 6.200 6.700.7-5 4.500 1.500 6.800-6-3.600-6 3.600L5 11.700 0 7.200l6.700-.7z" fill={c} /></svg>
));

const tileColors: Record<string, string> = {
  b: 'bg-[#3598db]', k: 'bg-[#e2445f]', t: 'bg-[#34b9c9]', o: 'bg-[#fbae0b]',
  n: 'bg-[#4c6a90]', g: 'bg-[#55bb7e]', p: 'bg-[#9c78cc]', s: 'bg-[#fb9c8c]',
};

const Glyph: React.FC<{ children: React.ReactNode }> = ({ children }) => (
  <svg width="15" height="15" viewBox="0 0 15 15" fill="none" stroke="#fff" strokeWidth="1.200">{children}</svg>
);

const symbols: [string, React.ReactNode][] = [
  ['b', <Glyph><path d="M7.500 0q3.500 0 3.500 4T9 9q0 1 3 1.500 1.500.5 1.500 3.500h-12q0-3 1.500-3.500Q6 10 6 9 4 8 4 4t3.500-4z" fill="#fff" stroke="none" /></Glyph>],
  ['k', <Glyph><path d="M3.500 5Q3 .5 7.500.5T11.500 5l1.500 2-2.500 1L9 10q4 .5 4 4H2q0-3.500 4-4L4.500 8 2 7z" fill="#fff" stroke="none" /></Glyph>],
  ['b', <Glyph><path d="M7.500.5q3.500 0 3.500 4T9 9.500q0 1.500 5 3V14H1v-1.500q5-1.500 5-3-2-1-2-5t3.500-4z" fill="#fff" stroke="none" /></Glyph>],
  ['b', <FaUserFriends size={16} />],
  ['t', <AlarmClock size={16} strokeWidth={2} />],
  ['o', <FaBomb />],
  ['n', <FaHandshake size={16} />],
  ['k', <FaThumbsUp size={13} />],
  ['g', <FaThumbsDown size={13} />],
  ['k', <Glyph><path d="M4 1v4l3 1M11 1v4L8 6M3.500 1h8" strokeWidth="1.500" /><circle cx="7.500" cy="10" r="4.300" fill="#fff" stroke="none" /><path d="M5 9l2.500 3.500L10 9" stroke="#e2445f" /></Glyph>],
  ['o', <FaTrophy />],
  ['o', <FaBalanceScale size={16} />],
  ['b', <Glyph><path d="M2 3l4 6" strokeWidth="4" /><path d="M5 6l9-5" strokeWidth="2" /><path d="M6 10h4l1 3H5zM4 14h8" fill="#fff" /></Glyph>],
  ['t', <Glyph><circle cx="7" cy="8" r="6" /><circle cx="7" cy="8" r="3.300" /><path d="M7 8l7-7M11 1.500V4h2.500" strokeWidth="1.500" /></Glyph>],
  ['g', <FaGlobeAfrica />],
  ['n', <FaShoppingCart />],
  ['g', <FaRocket className="-rotate-45" />],
  ['t', <FaCalendarAlt />],
  ['p', <Glyph><path d="M.5 2h14v11H.5zM.5 5h14M.5 7.700h14M.5 10.300h14M4 2v11" /></Glyph>],
  ['p', <Glyph><path d="M.5 6h3v8h-3zM5.500 1h3v13h-3zM10.500 4h3v10h-3z" fill="#fff" stroke="none" /></Glyph>],
  ['n', <FaChartPie />],
  ['b', <Glyph><path d="M1 0v14h14M2 4l3 1 2 3 3-1 4 2" strokeWidth="1" /></Glyph>],
  ['s', <Glyph><path d="M1 1v13h13V6l-3 2-2-3-2 2-3-3-2 3V1z" fill="#fff" stroke="none" /></Glyph>],
  ['k', <FaDollarSign size={16} />],
  ['s', <FaEuroSign size={16} />],
  ['b', <FaYenSign size={16} />],
  ['s', <FaQuestion />],
  ['o', <FaExclamation />],
  ['g', <FaCheck />],
  ['k', <FaTimes size={16} />],
  ['p', <Glyph><path d="M7.500 0a5 5 0 0 1 3 9L10 11H5L4.500 9a5 5 0 0 1 3-9zM5 12h5l-1 2.500H6z" fill="#fff" stroke="none" /><path d="M6 4q0-2 1.500-2T9 4 7.500 6v1M7.500 8v1.200" stroke="#9c78cc" /></Glyph>],
  ['s', <FaLayerGroup size={15} />],
  ['o', <FaFolder />],
  ['s', <FaEnvelope size={13} />],
  ['k', <FaPhoneAlt className="rotate-90" />],
  ['n', <Glyph><path d="M1.500 2h12v12h-12zM3.500 5.500h8M3.500 8h8M3.500 10.500h8M4 .5v2M6.500.5v2M9 .5v2M11.500.5v2" /></Glyph>],
  ['p', <FaPencilAlt />],
  ['t', <FaLock size={12} />],
  ['p', <Glyph><path d="M1 7h9v6.500H1z" fill="#fff" stroke="none" /><path d="M8 7V4q0-2.500 2.700-2.500T13.500 4v3" strokeWidth="1.600" /><path d="M5.500 9v2.500" stroke="#9c78cc" /></Glyph>],
  ['n', <FaHome />],
  ['n', <FaSearch />],
  ['t', <FaAt />],
  ['t', <Glyph><rect x="-3.500" y="-2.300" width="7" height="4.600" rx="2.300" transform="translate(4 4) rotate(45)" strokeWidth="1.500" /><rect x="-3.500" y="-2.300" width="7" height="4.600" rx="2.300" transform="translate(11 11) rotate(45)" strokeWidth="1.500" /><path d="M5 5l5 5" strokeWidth="1.500" /></Glyph>],
  ['g', <FaPlus />],
  ['k', <FaMinus />],
  ['g', <FaPlay size={11} />],
  ['k', <Glyph><path d="M3 1.500h3v12H3zM9 1.500h3v12H9z" fill="#fff" stroke="none" /></Glyph>],
  ['t', <Glyph><path d="M3 3h9v9H3z" fill="#fff" stroke="none" /></Glyph>],
  ['b', <FaPlane size={16} />],
  ['n', <Glyph><path d="M2 6h9q0 6-3 6H5q-3 0-3-6zM1 13h11v1.500H1z" fill="#fff" stroke="none" /><path d="M11 7h2.500q0 3-3.500 3M5 4.500q-1-1 0-2T5.500 0M8 4.500q-1-1 0-2T8.500 0" /></Glyph>],
  ['g', <Glyph><path d="M2.500 4.500h11v6h-11zM.5 6.500v2" strokeWidth="1.500" /><path d="M3 5h3v5H3z" fill="#fff" stroke="none" /></Glyph>],
  ['k', <Glyph><path d="M1 4l12-1 1 11H2z" fill="#fff" /><path d="M4 0l3 3.500L10 0" /><path d="M1 9l13-3M9 3L6 14" stroke="#e2445f" strokeWidth="1.300" /></Glyph>],
  ['o', <FaBolt />],
  ['g', <Glyph><path d="M3.500 9a3 3 0 0 1 0-5.500 4 4 0 0 1 7.500 0A3 3 0 0 1 11.500 9z" fill="#fff" stroke="none" /><path d="M4 11v2M7.500 11v3M11 11v2" /></Glyph>],
  ['s', <Glyph><circle cx="7.500" cy="7.500" r="3" fill="#fff" stroke="none" /><path d="M7.500 0v15M0 7.500h15M2.500 2.500l10 10M12.500 2.500l-10 10" strokeWidth=".9" /></Glyph>],
  ['k', <Glyph><path d="M3 8a3 3 0 0 1 0-5 5 5 0 0 1 9 0 3 3 0 0 1 0 5L9 9l1 2-3 4 .5-4L6 9z" fill="#fff" stroke="none" /></Glyph>],
  ['p', <Glyph><ellipse cx="7.500" cy="3.500" rx="6" ry="2" /><path d="M1.500 5q6 4 12 0M3 8q5 3 9.500-.5M4 10.500q3.500 2 7 0M6 13q2 1 3.500 0M1.500 4l4 8.500M13.500 4l-3.500 8" /></Glyph>],
  ['k', <FaHeart size={15} />],
  ['o', <FaMusic />],
  ['b', <FaCog size={15} />],
];

const symbolTiles = symbols.map(([c, glyph]) => (
  <span className={`flex items-center justify-center size-[19px] rounded-[1px] text-sm text-white ${tileColors[c]}`}>{glyph}</span>
));

const customIcons = [
  <svg width="14" height="16" viewBox="0 0 14 16"><path d="M1 1l8 .5V4L4 3.500V5h4v2.500H4V9h5v2.500L1 11z" fill="#3f88c5" /><path d="M9 5h4v9l-2 1.500-6-1V12l4 .5z" fill="#f3b13c" /></svg>,
  <svg width="16" height="16" viewBox="0 0 16 16"><circle cx="8" cy="8" r="8" fill="#20282a" /><path d="M4 3h8v2.500H4zM4 10.500h8V13H4zM6 7h4v2H6z" fill="#fff" /><path d="M8 5v6" stroke="#fff" /></svg>,
];

const sections: { title: string; icons: React.ReactNode[] }[] = [
  { title: '优先级', icons: priorities },
  { title: '进度', icons: progress },
  { title: '表情', icons: faces },
  { title: '箭头', icons: arrows },
  { title: '旗帜', icons: flags },
  { title: '星', icons: stars },
  { title: '符号', icons: symbolTiles },
  { title: '自定义图标', icons: customIcons },
];

const sideTools: { label: string; icon: React.ReactNode; active?: boolean }[] = [
  { label: '格式', icon: (
    <svg width="26" height="24" viewBox="0 0 26 24"><path d="M1 8l7-7 9 9-7 7z" fill={DARK} /><path d="M9.500 16.500l7-7 2 2-1.500 2 7 5.500q2 2 .5 4t-4 .5l-6-7-2.500 1.500z" fill={DARK} /><circle cx="22.500" cy="20.500" r="1" fill="#fff" /><path d="M8.500 16l8-8M4 5l2 2.500M6 3l3 3" stroke="#fff" strokeWidth=".8" /></svg>) },
  { label: '大纲', icon: (
    <svg width="22" height="22" viewBox="0 0 22 22"><path d="M0 0h22v22H0z" fill={DARK} /><path d="M2 2h4v4H2zM2 9h4v4H2zM2 16h4v4H2z" fill="#fff" /><path d="M8 4.500h12M8 11.500h12M8 18.500h12" stroke="#fff" /></svg>) },
  { label: '图标', active: true, icon: <Pentagon size={24} color={DARK} /> },
  { label: '剪贴画', icon: <ClipArt size={24} /> },
  { label: '任务', icon: (
    <svg width="22" height="24" viewBox="0 0 22 24"><path d="M0 2h22v5H0zM0 8.500h22V24H0z" fill={DARK} /><circle cx="4.500" cy="3" r="3" fill="#fff" /><circle cx="17.500" cy="3" r="3" fill="#fff" /><circle cx="4.500" cy="2.500" r="1.800" fill={DARK} /><circle cx="17.500" cy="2.500" r="1.800" fill={DARK} /><path d="M4 14h14v4l-3-1H7l-3 1z" fill="#fff" /></svg>) },
];

const panelTools: { label: string; icon: React.ReactNode; active?: boolean }[] = [
  { label: '列表', icon: <svg width="15" height="14"><path d="M0 0h3v3H0zM0 5.500h3v3H0zM0 11h3v3H0z" fill={DARK} /><path d="M5.500 1.500H15M5.500 7H15M5.500 12.500H15" stroke={DARK} /></svg> },
  { label: '网格', active: true, icon: <svg width="15" height="15" fill="none" stroke={DARK}><path d="M.5.500h6v6h-6zM8.500.5h6v6h-6zM.5 8.500h6v6h-6zM8.500 8.500h6v6h-6z" /><path d="M2.500 2.500h2v2h-2zM10.500 2.500h2v2h-2zM2.500 10.500h2v2h-2zM10.500 10.500h2v2h-2z" /></svg> },
  { label: '添加图标', icon: <svg width="17" height="15" fill={DARK}><path d="M3 0C1 1 1 4 3 4c-2 2-2 3-1 5v4h3V8q2-2-1-4 2-2-1-4zM6 13c2-3 0-6 3-8 3-1 4 1 4 3l-2 1v4z" /><path d="M10.500 10.500h6M13.500 7.500v6" stroke={DARK} strokeWidth="2" /></svg> },
  { label: '添加标签', icon: <svg width="17" height="15"><path d="M8 0h5v5L6 13 0 8z" fill={DARK} /><circle cx="10.500" cy="3" r="1.100" fill="#fff" /><path d="M9 10.500h7M12.500 7v7" stroke={DARK} strokeWidth="2" /></svg> },
  { label: '显示', icon: <svg width="17" height="14"><path d="M0 7Q8.500-5 17 7 8.500 19 0 7z" fill={DARK} /><circle cx="8.500" cy="7" r="3.700" fill={DARK} stroke="#fff" strokeWidth="1.500" /><circle cx="9.500" cy="6" r="1" fill="#fff" /></svg> },
];

const IconPanel: React.FC = () => (
  <aside className="flex flex-col w-[382px] shrink-0 text-xs text-[#222]">
    <div className="flex items-center justify-between h-[23px] pl-[9px] pr-2.5 shrink-0">
      <h2 className="text-[15px] text-[#333]">图标</h2>
      <IconButton label="固定" className="w-3 h-5">
        <svg width="10" height="12" viewBox="0 0 10 12" fill="none" stroke="#444"><path d="M2.500 7.500v-7h5v7M0 7.500h10M6.500 0v7M5 8v4" /></svg>
      </IconButton>
    </div>
    <div className="flex flex-1 min-h-0">
      <div className="flex flex-col gap-6 w-[41px] mt-4 pl-1 shrink-0 border-r border-[#c4c4c4]">
        {sideTools.map((t) => (
          <IconButton key={t.label} label={t.label} className={t.active ? 'size-[30px] bg-[#bcc0cd]' : 'size-[30px]'}>{t.icon}</IconButton>
        ))}
      </div>
      <div className="flex-1 min-w-0 pl-1.5 pr-0.5">
        <div className="flex items-start justify-end gap-1 h-[27px] pt-px border-b border-[#c4c4c4]">
          {panelTools.map((t) => (
            <IconButton key={t.label} label={t.label} className={t.active ? 'size-[23px] bg-[#bcc0cd]' : 'size-[23px]'}>{t.icon}</IconButton>
          ))}
        </div>
        <div className="pt-0.5">
          {sections.map((s) => (
            <section key={s.title}>
              <h3 className="h-[23px] leading-[25px] font-medium">{s.title}</h3>
              <div className="flex flex-wrap">
                {s.icons.map((icon, i) => (
                  <IconButton key={i} label={`${s.title} ${i + 1}`} className="size-[26px]">{icon}</IconButton>
                ))}
              </div>
            </section>
          ))}
        </div>
      </div>
    </div>
  </aside>
);

/* ---------- Status bar ---------- */

const StatusBar: React.FC = () => (
  <footer className="flex items-center justify-between h-[33px] pl-[7px] shrink-0 bg-[#5b6378] text-xs text-white">
    <a href="http://www.edrawsoft.cn" className="underline">http://www.edrawsoft.cn</a>
    <div className="flex items-center h-full pb-0.5">
      <IconButton label="缩小" className="w-4 h-5"><span className="w-2 h-px bg-white" /></IconButton>
      <input
        type="range"
        aria-label="缩放"
        defaultValue={23}
        className="w-[88px] h-4 mx-[5px] appearance-none bg-transparent [&::-webkit-slider-runnable-track]:h-0.5 [&::-webkit-slider-runnable-track]:bg-[#c5c8d0] [&::-webkit-slider-thumb]:appearance-none [&::-webkit-slider-thumb]:w-1.5 [&::-webkit-slider-thumb]:h-3 [&::-webkit-slider-thumb]:-mt-[5px] [&::-webkit-slider-thumb]:bg-white"
      />
      <IconButton label="放大" className="w-3 h-5">
        <svg width="8" height="9" viewBox="0 0 8 9"><path d="M0 4.500h8M4 .5v8" stroke="#fff" /></svg>
      </IconButton>
      <span className="w-[38px] ml-2.5 text-[#dfe1e7]">100%</span>
      <IconButton label="缩放列表" className="w-2 h-5"><Caret color="#8b91a2" /></IconButton>
      <IconButton label="适应页面" className="w-5 h-5">
        <svg width="15" height="15" fill="none" stroke="#fff"><path d="M0 .5h15M0 14.500h15M.5 0v15M14.500 0v15" strokeDasharray="1 1" /><path d="M3.500 3.500h8v8h-8z" /></svg>
      </IconButton>
      <IconButton label="适应窗口" className="w-[19px] h-5">
        <svg width="14" height="14" fill="none" stroke="#a3a8b5"><path d="M.5.5h13v13H.5zM7 0v14M0 7h14M4 3.500h6v7H4z" /></svg>
      </IconButton>
      <IconButton label="演示" className="w-[19px] h-5">
        <svg width="13" height="14" fill="none" stroke="#fff"><path d="M0 1h13" strokeWidth="2" /><path d="M2.500 2v6.500h8V2M4.500 4.500h4M6.500 9v4M4 13.500h5" /></svg>
      </IconButton>
      <svg width="11" height="11" className="self-end ml-2.5 mr-0.5" fill="#fff"><path d="M8 0h2v2H8zM8 4h2v2H8zM4 4h2v2H4zM8 8h2v2H8zM4 8h2v2H4zM0 8h2v2H0z" /></svg>
    </div>
  </footer>
);

const App: React.FC = () => (
  <div className="flex flex-col h-screen overflow-hidden bg-white border-t border-x border-[#45434f] font-['Open_Sans','Noto_Sans_CJK_SC',sans-serif]">
    <TitleBar />
    <MenuBar />
    <Ribbon />
    <div className="flex flex-1 min-h-0">
      <Workspace />
      <IconPanel />
    </div>
    <StatusBar />
  </div>
);

export default App;
